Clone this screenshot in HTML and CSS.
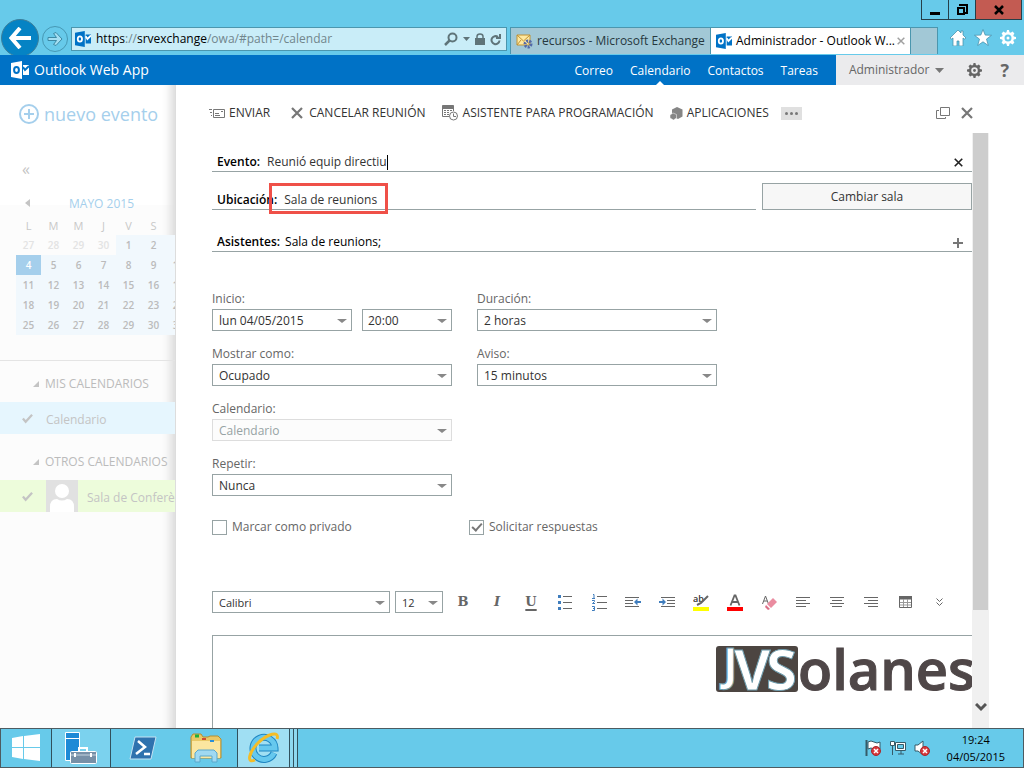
FILE: index.html
```html
<!DOCTYPE html>
<html lang="es">
<head>
<meta charset="utf-8">
<title>Administrador - Outlook Web App</title>
<link rel="stylesheet" href="styles.css">
</head>
<body>
<svg class="defs" aria-hidden="true">
  <symbol id="outlook" viewBox="0 0 18 18">
    <path fill="currentColor" d="M0 2 11 0v18L0 16zM12 4h6v10h-6z"/>
    <ellipse class="cut" cx="5.5" cy="9" rx="2.4" ry="3"/>
    <path class="cut" d="m12 6 2 3 4-4"/>
  </symbol>
  <symbol id="gear" viewBox="0 0 16 16">
    <path fill="currentColor" fill-rule="evenodd" d="M7 0h2l.5 2.2 1.2.5L12.600 1.600l1.800 1.800-1.100 1.900.5 1.200L16 7v2l-2.200.5-.5 1.200 1.100 1.900-1.800 1.800-1.900-1.100-1.200.5L9 16H7l-.5-2.200-1.200-.5-1.900 1.100-1.800-1.800 1.100-1.900-.5-1.200L0 9V7l2.200-.5.5-1.200-1.100-1.900 1.800-1.800 1.900 1.100 1.200-.5zM8 4.500a3.500 3.500 0 1 0 0 7 3.500 3.500 0 0 0 0-7z"/>
    <circle cx="8" cy="8" r="1.500" fill="currentColor"/>
  </symbol>
  <symbol id="cross" viewBox="0 0 12 12"><path d="m1 1 10 10M11 1 1 11" stroke="currentColor" stroke-width="2.200"/></symbol>
  <symbol id="tick" viewBox="0 0 12 12"><path d="m1 6 3 3.500L11 2" fill="none" stroke="currentColor" stroke-width="2.500"/></symbol>
  <symbol id="bad" viewBox="0 0 10 10"><circle cx="5" cy="5" r="4.500" fill="#d8383c" stroke="#a5282c"/><path d="m3 3 4 4M7 3 3 7" stroke="#fff" stroke-width="1.500"/></symbol>
</svg>

<header class="browser">
  <div class="window-buttons">
    <button aria-label="Minimizar"><svg width="10" height="12"><path d="M0 8h10v3H0z"/></svg></button>
    <button aria-label="Restaurar"><svg width="11" height="12" fill="none" stroke="#000" stroke-width="2"><path d="M3 2V1h7v8H8"/><path d="M1 4h6v6H1z"/></svg></button>
    <button class="close" aria-label="Cerrar"><svg width="10" height="10"><path d="m1 1 8 8M9 1 1 9" stroke="#000" stroke-width="2.500"/></svg></button>
  </div>
  <div class="navigation">
    <button class="back" aria-label="Atrás"><svg width="22" height="22" fill="none" stroke="#fff" stroke-width="4"><path d="M11 1 2.500 11 11 21M3 11h19"/></svg></button>
    <button class="forward" aria-label="Adelante"><svg width="16" height="14" viewBox="0 0 16 14" fill="#a4dff2" stroke="#3d8aa5"><path d="M1 5.500h8.500L6.500 1.500 9 .5 15 7l-6 6.500-2.500-1L9.500 8.500H1z"/></svg></button>
    <div class="address">
      <svg class="outlook-blue" width="16" height="16"><use href="#outlook"/></svg>
      <span class="url">https<i>://</i>srvexchange<i>/owa/#path=/calendar</i></span>
      <svg width="14" height="14" fill="none" stroke="#5f7479" stroke-width="2"><circle cx="8.500" cy="5.500" r="4"/><path d="M5.500 8.500 1 13" stroke-width="2.500"/></svg>
      <svg class="mini" width="7" height="4" fill="#5f7479"><path d="M0 0h7L3.500 4z"/></svg>
      <svg width="10" height="12" fill="#5f7479"><path d="M0 5h10v7H0z"/><path d="M2 6V3.500a3 2.500 0 0 1 6 0V6" fill="none" stroke="#5f7479" stroke-width="1.500"/></svg>
      <svg width="11" height="13" fill="none" stroke="#5f7479" stroke-width="2"><path d="M9.500 7.500a4 4 0 1 1-1.500-3.500"/><path d="M10 1v4H6" /></svg>
    </div>
    <div class="tab">
      <svg width="17" height="16"><path d="M1 2h13v10H1z" fill="#ffe9a0" stroke="#c09234"/><path d="m1 2 6.500 6L14 2M1 12l4-5M14 12l-4-5" fill="none" stroke="#c09234"/><circle cx="12" cy="11" r="3" fill="none" stroke="#5269a8" stroke-width="3" stroke-dasharray="2 1"/></svg>
      <span>recursos - Microsoft Exchange</span>
    </div>
    <div class="tab active">
      <svg class="outlook-blue" width="16" height="16"><use href="#outlook"/></svg>
      <span>Administrador - Outlook W...</span>
      <svg class="tab-close" width="8" height="8"><use href="#cross"/></svg>
    </div>
    <div class="new-tab"></div>
    <div class="browser-tools">
      <svg width="16" height="16" viewBox="0 0 16 16" fill="#fff" stroke="#3d8aa5" stroke-width=".7"><path d="M8 0 0 8l1.500 1L3 8v8h4v-5h2v5h4V8l1.500 1L16 8l-3-3V1h-2v2z"/></svg>
      <svg width="18" height="17" viewBox="0 0 18 17" fill="#fff" stroke="#3d8aa5" stroke-width=".7"><path d="m9 .5 2.200 5.600 6.300.2-5 3.800 1.800 6.400L9 12.800l-5.300 3.700 1.800-6.400-5-3.800 6.300-.2z"/></svg>
      <svg width="16" height="16"><use href="#gear"/></svg>
    </div>
  </div>
</header>

<div class="owa-bar">
  <div class="brand"><svg width="20" height="18"><use href="#outlook"/></svg>Outlook Web App</div>
  <nav>
    <a href="#">Correo</a><a href="#" class="current">Calendario</a><a href="#">Contactos</a><a href="#">Tareas</a>
  </nav>
  <div class="account">
    <button class="user">Administrador <svg width="9" height="5" fill="#777"><path d="M0 0h9L4.500 5z"/></svg></button>
    <svg width="15" height="15"><use href="#gear"/></svg>
    <b>?</b>
  </div>
</div>

<main>
  <aside>
    <button class="new-event"><svg width="20" height="20" fill="none" stroke="#a5cfec" stroke-width="2"><circle cx="10" cy="10" r="9"/><path d="M10 5v10M5 10h10"/></svg>nuevo evento</button>
    <div class="fold">«</div>
    <div class="month"><svg width="5" height="8" fill="#c4c4c4"><path d="M5 0v8L0 4z"/></svg><span>MAYO 2015</span></div>
    <table class="days">
      <thead><tr><th>L</th><th>M</th><th>M</th><th>J</th><th>V</th><th>S</th><th>D</th></tr></thead>
      <tbody>
        <tr><td class="out">27</td><td class="out">28</td><td class="out">29</td><td class="out">30</td><td>1</td><td>2</td><td>3</td></tr>
        <tr><td class="today">4</td><td>5</td><td>6</td><td>7</td><td>8</td><td>9</td><td>10</td></tr>
        <tr><td>11</td><td>12</td><td>13</td><td>14</td><td>15</td><td>16</td><td>17</td></tr>
        <tr><td>18</td><td>19</td><td>20</td><td>21</td><td>22</td><td>23</td><td>24</td></tr>
        <tr><td>25</td><td>26</td><td>27</td><td>28</td><td>29</td><td>30</td><td>31</td></tr>
      </tbody>
    </table>
    <section class="calendars">
      <h2><svg width="6" height="6" fill="#c4c4c4"><path d="M6 0v6H0z"/></svg>MIS CALENDARIOS</h2>
      <div class="entry blue"><svg width="11" height="11"><use href="#tick"/></svg><span>Calendario</span></div>
      <h2><svg width="6" height="6" fill="#c4c4c4"><path d="M6 0v6H0z"/></svg>OTROS CALENDARIOS</h2>
      <div class="entry green"><svg width="11" height="11"><use href="#tick"/></svg><svg class="avatar" width="32" height="32"><path fill="#e1e1e1" d="M0 0h32v32H0z"/><circle cx="16" cy="11" r="7" fill="#fff" /><path fill="#fff" d="M4 32v-5q0-8 7-8 5 3 10 0 7 0 7 8v5z"/></svg><span>Sala de Conferències</span></div>
    </section>
  </aside>

  <section class="panel">
    <div class="commands">
      <button><svg width="16" height="11" fill="none" stroke="#777"><path d="M4.500 1.500h11v8h-11zM0 1.500h3M1 4.500h2M2 7.500h1M6 5.500h4M6 7.500h5M12 3.500h2"/></svg>ENVIAR</button>
      <button class="cancel"><svg width="12" height="12"><use href="#cross"/></svg>CANCELAR REUNIÓN</button>
      <button><svg width="17" height="16" fill="none" stroke="#777"><path fill="#777" d="M.5.5h11v3H.5z"/><path d="M.5 3v8.500H7M11.500 3v3M2 5.500h8M2 7.500h6M2 9.500h5"/><path d="M4.500 4v7M7.500 4v6" stroke="#fff"/><circle cx="11.500" cy="11" r="4" fill="#fff"/><path d="M11.500 8.500v3H14"/></svg>ASISTENTE PARA PROGRAMACIÓN</button>
      <button><svg width="13" height="13" fill="#858585"><path d="m7 0 5.500 2.500v7L8 12 2 9V2.500z"/><path d="m3 6 3.500 1.500v3.500L3.500 13 0 11V8z" stroke="#fff" stroke-width=".5"/></svg>APLICACIONES</button>
      <button class="more" aria-label="Más"><svg width="13" height="3" fill="#777"><circle cx="1.500" cy="1.500" r="1.500"/><circle cx="6.500" cy="1.500" r="1.500"/><circle cx="11.500" cy="1.500" r="1.500"/></svg></button>
      <div class="panel-buttons">
        <button aria-label="Abrir en ventana"><svg width="14" height="12" fill="none" stroke="#777"><path d="M4.500.5h9v8h-9zM3 3.500H.5v8h9V10"/></svg></button>
        <button aria-label="Cerrar"><svg width="12" height="12"><use href="#cross"/></svg></button>
      </div>
    </div>

    <div class="scroller">
      <form class="form">
        <div class="line title">
          <label for="evento">Evento:</label><input id="evento" value="Reunió equip directiu"><span class="caret"></span>
          <button type="button" class="end dark" aria-label="Borrar"><svg width="9" height="9"><use href="#cross"/></svg></button>
        </div>
        <div class="place">
          <div class="line"><label for="ubicacion">Ubicación:</label><input id="ubicacion" value="Sala de reunions"><span class="marker"></span></div>
          <button type="button" class="room">Cambiar sala</button>
        </div>
        <div class="line people">
          <label for="asistentes">Asistentes:</label><input id="asistentes" value="Sala de reunions;">
          <button type="button" class="end" aria-label="Agregar"><svg width="10" height="10"><path d="M5 0v10M0 5h10" stroke="#777" stroke-width="2"/></svg></button>
        </div>

        <div class="fields">
          <div class="field"><label for="inicio">Inicio:</label>
            <div class="pair"><span class="drop"><select id="inicio"><option>lun 04/05/2015</option></select></span><span class="drop hour"><select aria-label="Hora"><option>20:00</option></select></span></div></div>
          <div class="field"><label for="duracion">Duración:</label><span class="drop"><select id="duracion"><option>2 horas</option></select></span></div>
          <div class="field"><label for="mostrar">Mostrar como:</label><span class="drop"><select id="mostrar"><option>Ocupado</option></select></span></div>
          <div class="field"><label for="aviso">Aviso:</label><span class="drop"><select id="aviso"><option>15 minutos</option></select></span></div>
          <div class="field first"><label for="calendario">Calendario:</label><span class="drop"><select id="calendario" disabled><option>Calendario</option></select></span></div>
          <div class="field first"><label for="repetir">Repetir:</label><span class="drop"><select id="repetir"><option>Nunca</option></select></span></div>
        </div>

        <div class="checks">
          <label><input type="checkbox">Marcar como privado</label>
          <label><input type="checkbox" checked>Solicitar respuestas</label>
        </div>

        <div class="format">
          <span class="drop font"><select aria-label="Fuente"><option>Calibri</option></select></span>
          <span class="drop size"><select aria-label="Tamaño"><option>12</option></select></span>
          <div class="tools">
            <button type="button" class="letter">B</button>
            <button type="button" class="letter italic">I</button>
            <button type="button" class="letter underline">U</button>
            <button type="button" aria-label="Viñetas"><svg width="14" height="16"><path d="M5 2.500h9M5 8.500h9M5 14.500h9" stroke="#666"/><path d="M0 1h3v3H0zM0 7h3v3H0zM0 13h3v3H0z" fill="#3f7dbd"/></svg></button>
            <button type="button" aria-label="Numeración"><svg width="15" height="17"><path d="M5 2.500h10M5 8.500h10M5 14.500h10" stroke="#666"/><path d="M1 .5h1V4M0 4.500h3M0 6.500h2.500v1L.5 9.500H3M0 12.500h2.500v4H0M1 14.500h1.500" fill="none" stroke="#3f7dbd"/></svg></button>
            <button type="button" aria-label="Reducir sangría"><svg width="16" height="12"><path d="M0 1.500h14M0 4.500h8M0 7.500h8M0 10.500h14" stroke="#666"/><path d="m9 6 3.500-3.500V5H16v2h-3.500v2.500z" fill="#3f7dbd"/></svg></button>
            <button type="button" aria-label="Aumentar sangría"><svg width="16" height="12"><path d="M2 1.500h14M8 4.500h8M8 7.500h8M2 10.500h14" stroke="#666"/><path d="M7 6 3.500 2.500V5H0v2h3.500v2.500z" fill="#3f7dbd"/></svg></button>
            <button type="button" aria-label="Resaltar"><svg width="16" height="17"><path fill="#ff0" d="M0 13h16v4H0z"/><text x="0" y="8" class="ab">ab</text><path d="m15 2-7 7-4 2" fill="none" stroke="#666" stroke-width="2"/></svg></button>
            <button type="button" aria-label="Color de fuente"><svg width="16" height="17"><path fill="red" d="M0 13h16v4H0z"/><path d="m3.500 11.500 4-10h1l4 10M5 8h6" fill="none" stroke="#666" stroke-width="1.800"/></svg></button>
            <button type="button" aria-label="Borrar formato"><svg width="15" height="15"><path d="m.5 9 3-8 3 8M2 6h3" fill="none" stroke="#666"/><path fill="#ea8ca0" d="m11 3 4 4-6 6-4-4z"/><path fill="#dc6f87" d="m4 10 4 4-2 1-3-3z"/></svg></button>
            <button type="button" aria-label="Izquierda"><svg width="14" height="11" stroke="#666"><path d="M0 .5h14M0 3.500h10M0 6.500h14M0 9.500h10"/></svg></button>
            <button type="button" aria-label="Centrar"><svg width="14" height="11" stroke="#666"><path d="M0 .5h14M2 3.500h10M0 6.500h14M2 9.500h10"/></svg></button>
            <button type="button" aria-label="Derecha"><svg width="14" height="11" stroke="#666"><path d="M0 .5h14M4 3.500h10M0 6.500h14M4 9.500h10"/></svg></button>
            <button type="button" aria-label="Tabla"><svg width="13" height="12" fill="none" stroke="#666"><path d="M.5.5h12v11H.5z"/><path fill="#666" d="M0 0h13v3H0z"/><path d="M1 6.500h11M1 9h11M4.500 3v8M8.500 3v8" stroke="#999"/></svg></button>
            <button type="button" aria-label="Más"><svg width="7" height="9" fill="none" stroke="#666"><path d="m.5.5 3 3 3-3m-6 4 3 3 3-3"/></svg></button>
          </div>
        </div>
        <div class="editor">
          <svg class="logo" width="260" height="60" role="img" aria-label="JMSolanes">
            <rect y="10" width="82" height="46" rx="3" fill="#4c4541"/>
            <text class="initials"><tspan class="hook" x="7" y="44">J</tspan><tspan x="18" y="54">V</tspan><tspan x="50" y="54">S</tspan></text>
            <text class="word" x="82" y="54">olanes</text>
          </svg>
        </div>
      </form>
      <div class="scrollbar"><div class="thumb"></div><svg width="12" height="9" fill="none" stroke="#555" stroke-width="3"><path d="m1 1 5 5 5-5"/></svg></div>
    </div>
  </section>
</main>

<footer class="taskbar">
  <button class="start" aria-label="Inicio"><svg width="28" height="28" fill="#fff"><path d="m0 4 11-2v11H0zM12 2l16-2v13H12zM0 14h11v11L0 23zM12 14h16v13l-16-2z"/></svg></button>
  <button class="open" aria-label="Administrador del servidor"><svg width="34" height="34"><path fill="#1e8ad6" stroke="#fff" d="M1.500 1.500h14v28h-14z"/><path d="M2 7.500h13" stroke="#fff"/><path d="M15 21v-4h8v4" fill="none" stroke="#fff" stroke-width="2"/><rect x="6.500" y="20.500" width="26" height="12" rx="1" fill="#7790a7" stroke="#fff"/><path d="M7 24h25" stroke="#c6d4df"/><path d="M11 22v4M27 22v4" stroke="#fff" stroke-width="2"/></svg></button>
  <button class="plain" aria-label="PowerShell"><svg width="28" height="24"><path fill="#2f72ae" stroke="#c6e2f2" d="M6 1h21l-5 22H1z"/><path d="m9 5 7 6-9 7M15 18h6" fill="none" stroke="#fff" stroke-width="2.500"/></svg></button>
  <button class="plain" aria-label="Explorador"><svg width="32" height="30"><path fill="#e9c867" stroke="#b48e33" d="M1 4 3 1h8l2 3h5l2-1h8l3 3v19H1z"/><path fill="#fbe6a0" d="M2 8h28v17H2z"/><path stroke="#1fae3c" stroke-width="3" d="M5 3h4"/><path stroke="#d14a32" stroke-width="2" d="M12 6h4"/><path stroke="#2a8fd8" stroke-width="2" d="M20 8h4"/><path fill="#9fd9f2" stroke="#5aa8cc" d="M5 29V20l3-3h16l3 3v9h-5v-6H10v6z"/></svg></button>
  <button class="ie" aria-label="Internet Explorer"><svg width="32" height="32" fill="none"><path d="M26 21A11 11 0 1 1 27 16H11" stroke="#1f86c2" stroke-width="7"/><path d="M26 21A11 11 0 1 1 27 16H11" stroke="#66c8ee" stroke-width="5"/><path d="M7 28C-2 32 1 20 10 11S32-2 29 7" stroke="#f4bd27" stroke-width="3"/></svg></button>
  <span class="stack"></span><span class="stack"></span>
  <div class="tray">
    <svg width="16" height="16"><path d="M1.500 0v16" stroke="#365b68" stroke-width="2"/><path d="M3 2q3-2 6 0t6 0v7q-3 2-6 0T3 9z" fill="#fff" stroke="#365b68"/><use href="#bad" x="6" y="6" width="10" height="10"/></svg>
    <svg width="17" height="16" fill="#fff" stroke="#365b68"><path d="M6.500 2.500h10v8h-10zM9 14h6M12 11v3"/><path d="M1.500 1.500h4v4h-4zM3.500 6v9"/><path d="M8.500 4.500h6v4h-6z" fill="#67caea"/></svg>
    <svg width="16" height="16"><path d="M1 5h3l5-4v14l-5-4H1z" fill="#fff" stroke="#365b68"/><use href="#bad" x="6" y="6" width="10" height="10"/></svg>
  </div>
  <div class="clock"><span>19:24</span><span>04/05/2015</span></div>
</footer>
</body>
</html>
```
FILE: styles.css
```css
* { box-sizing: border-box; }
body {
  margin: 0;
  height: 100vh;
  display: flex;
  flex-direction: column;
  overflow: hidden;
  background: #fff;
  color: #333;
  font: 12px/16px "Open Sans", "Noto Sans", sans-serif;
}
button, input, select { font: inherit; color: inherit; margin: 0; padding: 0; border: 0; background: none; }
button { display: inline-flex; align-items: center; justify-content: center; white-space: nowrap; }
input { outline: 0; }
svg { display: block; flex: none; }
.defs { position: absolute; width: 0; height: 0; }
.cut { fill: none; stroke: var(--cut, #fff); stroke-width: 2; }

/* Browser window */
.browser { flex: none; background: #67caea; }
.window-buttons { display: flex; height: 20px; justify-content: flex-end; padding-right: 2px; }
.window-buttons button { width: 27px; border: solid #253f49; border-width: 0 0 1px 1px; }
.window-buttons .close { width: 47px; background: #c35b52; border-right-width: 1px; }
.navigation { display: flex; height: 35px; align-items: flex-end; padding-bottom: 1px; }
.back { width: 38px; height: 38px; margin: 0 3px -1px 1px; border-radius: 50%; background: #0583c4; border: 1px solid #3c7f9b; align-self: center; }
.forward { width: 26px; height: 26px; margin: 0 3px 2px 0; border-radius: 50%; border: 1px solid #4698b4; }
.address {
  flex: 426 1 0; min-width: 0; height: 24px; margin: 0 3px 3px 0; padding: 0 5px 0 3px;
  display: flex; align-items: center; gap: 5px;
  background: #c9edf8; border: 1px solid #4b96ae;
}
.url { flex: 1; min-width: 0; overflow: hidden; white-space: nowrap; color: #000; }
.url i { font-style: normal; color: #71868c; }
.outlook-blue { color: #0072c6; }
.tab {
  flex: 189 1 0; min-width: 0; height: 27px; padding: 0 5px; display: flex; align-items: center; gap: 4px;
  background: #a2c8d6; border: solid #4b96ae; border-width: 1px 0 0 1px; white-space: nowrap; color: #26383e;
}
.tab span { flex: 1; min-width: 0; }
.tab.active { background: #fff; color: #000; }
.tab-close { color: #a0a0a0; }
.new-tab { width: 28px; height: 27px; background: #a2c8d6; border: 1px solid #4b96ae; border-bottom: 0; }
.browser-tools { display: flex; align-items: center; gap: 8px; padding: 0 8px 8px 12px; color: #fff; }

/* Application bar */
.owa-bar { flex: none; display: flex; height: 30px; background: #0072c6; color: #fff; }
.brand { --cut: #0072c6; display: flex; align-items: center; gap: 4px; padding-left: 10px; font-size: 14px; }
.owa-bar nav { display: flex; gap: 17px; margin-left: auto; padding: 1px 18px 0 0; }
.owa-bar nav a { display: flex; align-items: center; position: relative; color: #fff; text-decoration: none; }
.current::after {
  content: ""; position: absolute; bottom: 0; left: 50%; margin-left: -4px;
  border: solid transparent; border-width: 0 4px 4px; border-bottom-color: #fff;
}
.account { display: flex; align-items: center; gap: 18px; padding: 0 15px 0 13px; background: #ebebed; color: #666; }
.user { gap: 6px; margin-right: 5px; }
.account b { font-size: 18px; }

/* Sidebar */
main { flex: 1; min-height: 0; display: flex; }
aside { width: 175px; flex: none; overflow: hidden; background: linear-gradient(#fff 120px, #fcfcfc 120px); color: #bbb; box-shadow: inset -12px 0 10px -8px #d8d8d8; }
.new-event { height: 60px; padding: 0 0 2px 19px; gap: 5px; color: #a5cfec; font-size: 18px; }
.fold { height: 48px; padding: 16px 0 0 22px; font-size: 16px; color: #c4c4c4; }
.month { display: flex; align-items: center; height: 20px; padding-left: 25px; gap: 39px; color: #a5cfec; }
.month span { padding-top: 2px; }
.days { margin: 3px 0 25px 16px; width: 175px; table-layout: fixed; border-collapse: collapse; text-align: center; font-size: 10px; }
.days th, .days td { height: 20px; padding: 0; line-height: 16px; }
.days th { height: 19px; font-weight: 400; font-size: 11px; color: #c8c8c8; }
.days td { background: #f1f8fd; font-weight: 600; }
.days .out { background: none; color: #e3e3e3; }
.days .today { background: #a5cfec; color: #fff; }
.calendars { border-top: 1px solid #e4e4e4; }
.calendars h2 { display: flex; align-items: center; gap: 6px; height: 41px; margin: 0; padding: 4px 0 0 33px; font-size: 12px; font-weight: 400; white-space: nowrap; }
.entry { display: flex; align-items: center; gap: 13px; height: 32px; padding-left: 22px; margin-bottom: 5px; white-space: nowrap; color: #c4c4c4; }
.entry span { padding-top: 3px; }
.blue { background: #e6f6fe; }
.green { background: #edfcdb; }
.green .avatar { margin-right: -4px; }

/* Event panel */
.panel { flex: 1; min-width: 0; display: flex; flex-direction: column; border-left: 1px solid #ddd; }
.commands { display: flex; align-items: center; flex: none; height: 48px; padding: 8px 51px 0 33px; gap: 16px; }
.commands button { gap: 4px; }
.commands svg { color: #777; }
.commands .cancel { gap: 6px; margin-left: 5px; }
.commands .more { width: 21px; height: 13px; background: #e0e0e0; margin-left: -4px; }
.panel-buttons { display: flex; gap: 11px; margin-left: auto; }
.scroller { flex: 1; min-height: 0; display: flex; padding-right: 35px; }
.form { flex: 1; min-width: 0; display: flex; flex-direction: column; padding-left: 36px; overflow: hidden; }
.scrollbar { width: 17px; flex: none; display: flex; flex-direction: column; align-items: center; justify-content: space-between; padding-bottom: 16px; background: #f0f0f0; }
.thumb { width: 15px; height: 477px; background: #cdcdcd; }

.line { position: relative; display: flex; align-items: center; height: 21px; flex: none; border-bottom: 1px solid #97a3a4; padding: 2px 0 0 5px; }
.line label { color: #000; font-weight: 600; margin-right: 7px; }
.line input { flex: 1; min-width: 0; }
.title { margin-top: 18px; }
.title input { flex: none; field-sizing: content; }
.caret { width: 1px; height: 15px; background: #000; }
.end { margin-left: auto; padding-right: 9px; }
.dark { color: #222; }
.people label { margin-right: 5px; }
.people .end { padding-top: 2px; }
.people input { color: #000; }
.place { display: flex; flex: none; gap: 6px; align-items: flex-end; margin: 11px 0 21px; }
.place .line { flex: 1; }
.marker { position: absolute; left: 57px; top: -6px; width: 119px; height: 31px; border: 3px solid #ef5048; }
.room { width: 210px; height: 27px; border: 1px solid #97a3a4; background: #f7f7f7; }

.fields { display: grid; grid-template-columns: 240px 240px; gap: 15px 25px; margin-top: 39px; color: #666; }
.field { display: flex; flex-direction: column; gap: 2px; }
.first { grid-column: 1; }
.pair { display: flex; gap: 10px; }
.pair .drop { flex: 1; }
.pair .hour { flex: none; width: 90px; }
.drop { position: relative; display: block; }
.drop::after { content: ""; position: absolute; right: 5px; top: 10px; border: solid transparent; border-width: 4px 5px 0; border-top-color: #888; pointer-events: none; }
.drop select { display: block; appearance: none; width: 100%; height: 22px; padding: 2px 6px 0; border: 1px solid #97a3a4; background: #fff; color: #333; }
.drop select:disabled { border-color: #ddd; background: #fcfcfc; color: #97a3a4; opacity: 1; }
.hour select { padding-left: 5px; }

.checks { display: grid; grid-template-columns: 240px 240px; gap: 17px; margin-top: 23px; color: #666; }
.checks label { display: flex; align-items: center; gap: 5px; }
.checks input { appearance: none; width: 15px; height: 15px; border: 1px solid #97a3a4; display: grid; place-items: center; }
.checks input:checked::after { content: ""; width: 4px; height: 8px; border: solid #777; border-width: 0 2px 2px 0; transform: rotate(42deg); margin-bottom: 2px; }

.format { display: flex; align-items: center; margin-top: 56px; font-size: 11px; }
.font { width: 178px; margin-right: 5px; }
.size { width: 48px; margin-right: 3px; }
.tools { display: flex; }
.tools button { width: 34px; height: 22px; }
.tools .letter { color: #666; font: bold 13px/18px "DejaVu Serif", serif; }
.tools .italic { font-style: italic; }
.tools .underline { text-decoration: underline; text-decoration-thickness: 2px; text-underline-offset: 3px; }
.ab { font: 600 9px "Open Sans", sans-serif; fill: #333; }
.editor { flex: 1; min-height: 0; display: flex; justify-content: flex-end; margin-top: 22px; border: solid #97a3a4; border-width: 1px 0 0 1px; overflow: hidden; }
.logo { margin-right: -4px; font-family: "Open Sans", sans-serif; font-weight: 600; }
.word { font-size: 56px; fill: #4f4748; stroke: #4f4748; stroke-width: 1; }
.initials { font-size: 56px; font-weight: 700; fill: #fff; stroke: #6e9cad; stroke-width: 1; }
.hook { font-size: 44px; }

/* Taskbar */
.taskbar { flex: none; display: flex; height: 40px; background: #67caea; border: 1px solid #4d5b61; }
.taskbar .start { width: 50px; }
.open { width: 60px; background: #7bd2ee; border: solid #31515d; border-width: 0 1px; }
.plain { width: 63px; }
.ie { width: 53px; background: #a0dff3; border: solid #31515d; border-width: 0 1px; }
.stack { width: 4px; background: #8ed8f0; border-right: 1px solid #31515d; }
.tray { display: flex; align-items: center; gap: 8px; margin-left: auto; padding-right: 17px; }
.clock { display: flex; flex-direction: column; justify-content: center; align-items: center; padding-right: 18px; color: #000; line-height: 17px; font-size: 11px; }
```
